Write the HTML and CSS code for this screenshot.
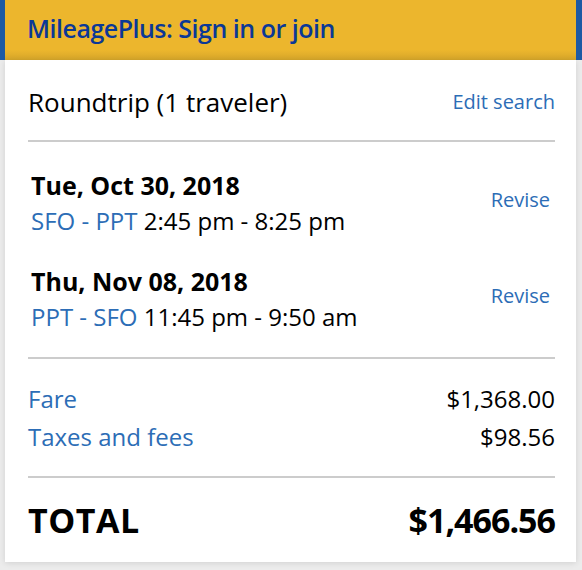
FILE: index.html
```html
<!DOCTYPE html>
<html lang="en">
<head>
<meta charset="utf-8">
<title>Trip summary</title>
<link rel="stylesheet" href="styles.css">
</head>
<body>
<div class="page">
  <header class="mp-bar">
    <a class="mp-link" href="#">MileagePlus: Sign in or join</a>
  </header>
  <main class="card">
    <section class="row search">
      <span class="search-title">Roundtrip (1 traveler)</span>
      <a class="link small" href="#">Edit search</a>
    </section>
    <section class="trips">
      <div class="trip">
        <div class="trip-info">
          <div class="trip-date">Tue, Oct 30, 2018</div>
          <div class="trip-route"><span class="link">SFO - PPT</span> 2:45 pm - 8:25 pm</div>
        </div>
        <a class="link small revise" href="#">Revise</a>
      </div>
      <div class="trip">
        <div class="trip-info">
          <div class="trip-date">Thu, Nov 08, 2018</div>
          <div class="trip-route"><span class="link">PPT - SFO</span> 11:45 pm - 9:50 am</div>
        </div>
        <a class="link small revise" href="#">Revise</a>
      </div>
    </section>
    <section class="prices">
      <div class="row price"><a class="link" href="#">Fare</a><span>$1,368.00</span></div>
      <div class="row price"><a class="link" href="#">Taxes and fees</a><span>$98.56</span></div>
    </section>
    <section class="row total">
      <span class="total-label">TOTAL</span>
      <span class="total-amount">$1,466.56</span>
    </section>
  </main>
</div>
</body>
</html>
```
FILE: styles.css
```css
html, body {
  margin: 0;
  padding: 0;
}
body {
  background: #ececec;
  font-family: "Open Sans", "Liberation Sans", sans-serif;
  color: #000;
  width: 582px;
  height: 570px;
  overflow: hidden;
}
.page {
  width: 582px;
}
.mp-bar {
  height: 60px;
  box-sizing: border-box;
  background: linear-gradient(to bottom, #ecb62d 0, #ecb62d 50px, #d6a62a 60px);
  border-left: 5px solid #1d5aa4;
  border-right: 6px solid #1d5aa4;
  display: flex;
  align-items: center;
  padding-left: 22px;
  padding-bottom: 4px;
}
.mp-link {
  font-size: 25px;
  font-weight: 600;
  color: #0b3896;
  text-decoration: none;
  letter-spacing: -0.5px;
}
.card {
  margin: 0 6px 0 5px;
  background: #fff;
  padding: 0 21px 0 23px;
  box-shadow: 0 1px 6px rgba(0, 0, 0, 0.12);
  height: 502px;
  box-sizing: border-box;
}
.row {
  display: flex;
  justify-content: space-between;
  align-items: center;
}
.link {
  color: #2c6db6;
  text-decoration: none;
}
.small {
  font-size: 20px;
}
.search {
  padding: 28px 0 24px;
  border-bottom: 2px solid #cccccc;
  font-size: 26px;
  line-height: 28px;
}
.trips {
  padding: 29px 5px 26px 3px;
  border-bottom: 2px solid #cccccc;
}
.trip {
  display: flex;
  justify-content: space-between;
  align-items: center;
}
.trip + .trip {
  margin-top: 32px;
}
.trip-date {
  font-size: 25px;
  font-weight: 700;
  line-height: 28px;
}
.trip-route {
  font-size: 24px;
  line-height: 28px;
  margin-top: 8px;
}
.revise {
  margin-top: -8px;
}
.prices {
  padding: 26px 0 25px;
  border-bottom: 2px solid #cccccc;
}
.price {
  font-size: 24px;
  line-height: 28px;
}
.price + .price {
  margin-top: 10px;
}
.total {
  padding-top: 22px;
  font-size: 34px;
  line-height: 40px;
  font-weight: 700;
}
.total-label {
  letter-spacing: 0.5px;
}
.total-amount {
  letter-spacing: -1px;
}
```
